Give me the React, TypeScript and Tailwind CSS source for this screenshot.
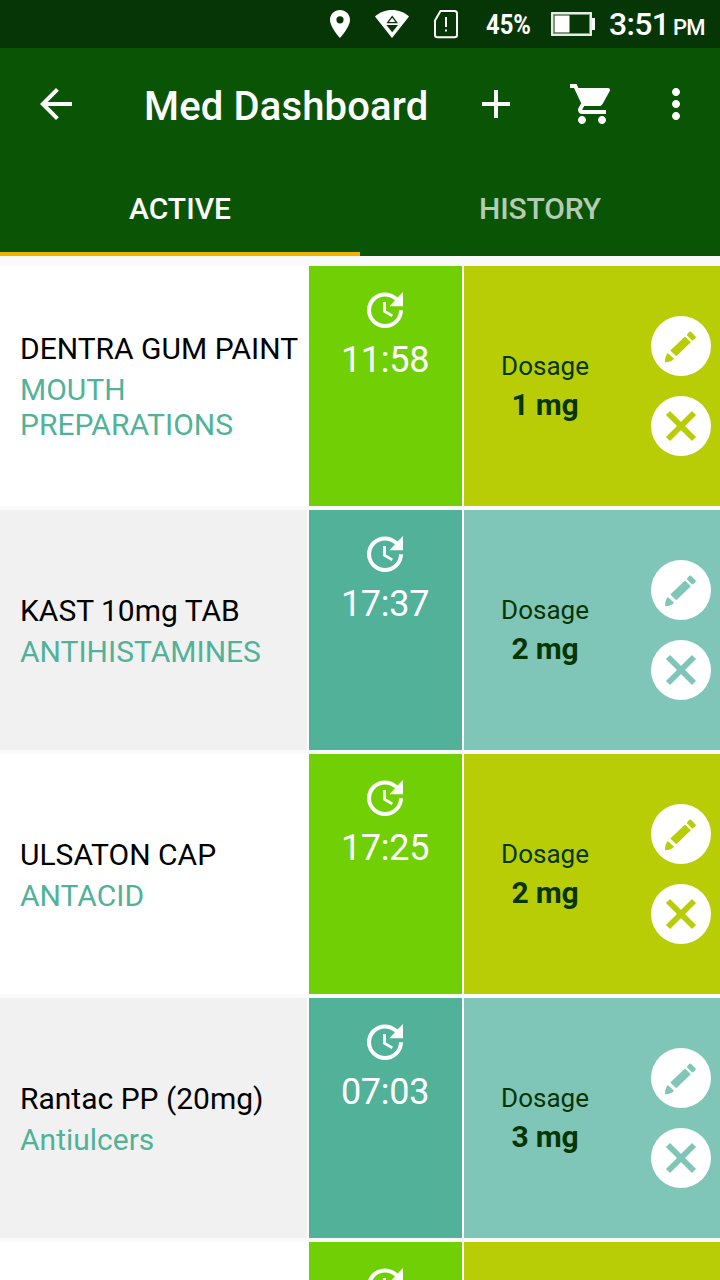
type Med = { name: string; category: string; time: string; dose: string };

const meds: (Med | null)[] = [
  { name: 'DENTRA GUM PAINT', category: 'MOUTH PREPARATIONS', time: '11:58', dose: '1 mg' },
  { name: 'KAST 10mg TAB', category: 'ANTIHISTAMINES', time: '17:37', dose: '2 mg' },
  { name: 'ULSATON CAP', category: 'ANTACID', time: '17:25', dose: '2 mg' },
  { name: 'Rantac PP (20mg)', category: 'Antiulcers', time: '07:03', dose: '3 mg' },
  null,
];

function Icon({ d, className = 'size-12' }: { d: string; className?: string }) {
  return (
    <svg viewBox="0 0 24 24" fill="currentColor" className={`block shrink-0 ${className}`}>
      <path d={d} />
    </svg>
  );
}

const UPDATE =
  'M21 10.12h-6.78l2.74-2.82c-2.73-2.7-7.15-2.8-9.88-.1-2.73 2.71-2.73 7.08 0 9.79s7.15 2.71 9.88 0C18.32 15.65 19 14.08 19 12.1h2c0 1.98-.88 4.55-2.64 6.29-3.51 3.48-9.21 3.48-12.72 0-3.5-3.47-3.53-9.11-.02-12.58s9.14-3.47 12.65 0L21 3v7.12zM12.5 8v4.25l3.5 2.08-.72 1.21L11 13V8h1.5z';
const BACK = 'M20 11H7.83l5.59-5.59L12 4l-8 8 8 8 1.41-1.41L7.83 13H20v-2z';
const PLUS = 'M19 13h-6v6h-2v-6H5v-2h6V5h2v6h6v2z';
const CART =
  'M7 18c-1.1 0-1.99.9-1.99 2S5.9 22 7 22s2-.9 2-2-.9-2-2-2zM1 2v2h2l3.6 7.59-1.35 2.45c-.16.28-.25.61-.25.96 0 1.1.9 2 2 2h12v-2H7.42c-.14 0-.25-.11-.25-.25l.03-.12.9-1.63h7.45c.75 0 1.41-.41 1.75-1.03l3.58-6.49c.08-.14.12-.31.12-.48 0-.55-.45-1-1-1H5.21l-.94-2H1zm16 16c-1.1 0-1.99.9-1.99 2s.89 2 1.99 2 2-.9 2-2-.9-2-2-2z';
const MORE =
  'M12 8c1.1 0 2-.9 2-2s-.9-2-2-2-2 .9-2 2 .9 2 2 2zm0 2c-1.1 0-2 .9-2 2s.9 2 2 2 2-.9 2-2-.9-2-2-2zm0 6c-1.1 0-2 .9-2 2s.9 2 2 2 2-.9 2-2-.9-2-2-2z';

function StatusBar() {
  return (
    <div className="flex h-12 shrink-0 items-start bg-[#063506] pl-[330px] text-white">
      <svg viewBox="0 0 20 28" className="mt-[10px] h-7 w-5" fill="currentColor">
        <path
          fillRule="evenodd"
          d="M10 0C4.4 0 0 4.4 0 9.8 0 17.2 10 28 10 28s10-10.800 10-18.200C20 4.400 15.600 0 10 0zm0 13.400a3.600 3.600 0 1 1 0-7.200 3.600 3.600 0 0 1 0 7.200z"
        />
      </svg>
      <svg viewBox="0 0 34 28" className="ml-[25px] mt-[10px] h-7 w-[34px]">
        <path d="M17 28L0 6.500C4.500 2.300 10.500 0 17 0s12.500 2.300 17 6.500z" fill="currentColor" />
        <path d="M17.200 5.500L23 13.300H11.400zM11.400 14.900H23L17.200 22.300z" fill="#063506" />
        <path d="M17.200 7.800L20.400 12.100H14z" fill="currentColor" />
      </svg>
      <svg viewBox="0 0 24 29" className="ml-[25px] mt-[10px] h-[29px] w-6" fill="none" stroke="currentColor">
        <path d="M6.500 1H20.500Q23 1 23 3.500V25Q23 27.300 20.500 27.300H3.500Q1 27.300 1 25V10.500Z" strokeWidth="2" />
        <path d="M12 7v10M12 19.500v2" strokeWidth="2" />
      </svg>
      <span className="ml-7 mt-[7px] h-9 w-[47px] origin-left scale-x-[0.850] whitespace-nowrap text-[28px] leading-9 font-bold">
        45%
      </span>
      <svg viewBox="0 0 44 24" className="ml-[18px] mt-3 h-6 w-11">
        <rect x="1" y="1" width="39" height="22" fill="none" stroke="#fff" strokeWidth="1.800" />
        <rect x="2.500" y="2.500" width="36" height="19" fill="none" stroke="#7e9b7e" strokeWidth="1" />
        <path d="M3.500 3.500h15v17h-15zM41 6h3v12h-3z" fill="#fff" />
      </svg>
      <span className="ml-[14px] mt-1.5 w-[64px] whitespace-nowrap text-[32px] leading-9 font-medium tracking-[-0.7px]">3:51</span>
      <span className="mt-[10px] text-[22px] leading-9 font-medium tracking-[-0.8px]">PM</span>
    </div>
  );
}

function Header() {
  return (
    <header className="shrink-0 bg-[#0a5405] text-white">
      <div className="flex h-28 items-center pl-8 pr-5">
        <Icon d={BACK} />
        <h1 className="ml-16 w-[328px] whitespace-nowrap pt-1.5 text-[40px] leading-[48px] font-medium tracking-[0.15px]">
          Med Dashboard
        </h1>
        <Icon d={PLUS} />
        <Icon d={CART} className="ml-12 size-12" />
        <Icon d={MORE} className="ml-9 size-12" />
      </div>
      <nav className="grid h-24 grid-cols-2 text-center text-[30px] leading-[98px] font-medium">
        <div className="h-24 border-b-4 border-[#f0b400]">ACTIVE</div>
        <div className="h-24 tracking-[-0.15px] text-[#b5ccb4]">HISTORY</div>
      </nav>
    </header>
  );
}

function MedRow({ med, alt }: { med: Med | null; alt: boolean }) {
  return (
    <li className="flex h-60 shrink-0 bg-white">
      <div className={`flex w-[307px] flex-col justify-center pl-5 pt-px text-[30px] leading-[35px] ${alt ? 'bg-[#f1f1f1]' : 'bg-white'}`}>
        {med && (
          <>
            <div className="whitespace-nowrap text-black">{med.name}</div>
            <div className="mt-1.5 text-[#51b299]">{med.category}</div>
          </>
        )}
      </div>
      <div className={`ml-0.5 flex w-[153px] flex-col items-center pr-px pt-5 text-white ${alt ? 'bg-[#51b299]' : 'bg-[#70cf05]'}`}>
        <Icon d={UPDATE} />
        {med && <div className="mt-[5px] text-[36px] leading-[42px] tracking-[-0.3px]">{med.time}</div>}
      </div>
      <div className={`ml-0.5 flex flex-1 items-center ${alt ? 'bg-[#80c6b8] text-[#80c6b8]' : 'bg-[#b8cd05] text-[#b8cd05]'}`}>
        {med && (
          <>
            <div className="mt-0.5 w-[162px] text-center text-[#063506]">
              <div className="text-[26px] leading-[30px]">Dosage</div>
              <div className="mt-1.5 text-[30px] leading-9 font-bold tracking-[-0.2px]">{med.dose}</div>
            </div>
            <div className="ml-[25px] flex flex-col gap-5">
              <button className="block size-[60px] rounded-full bg-white" aria-label="Edit">
                <svg viewBox="0 0 60 60" fill="currentColor" className="size-[60px]">
                  <path d="M38.300 15.800Q39.200 15 40 15.800L44.600 20.400Q45.200 21.200 44.600 21.900L41.500 24.800 35.600 18.900zM34 20.500L39.800 26.300 25.300 40.300 19.300 34.600zM16.800 37L23 42.700Q20.500 46 14 46.200Q13.800 40.500 16.800 37z" />
                </svg>
              </button>
              <button className="block size-[60px] rounded-full bg-white" aria-label="Remove">
                <svg viewBox="0 0 60 60" fill="none" stroke="currentColor" strokeWidth="5.800" className="size-[60px]">
                  <path d="M17 17L43 43M43 17L17 43" />
                </svg>
              </button>
            </div>
          </>
        )}
      </div>
    </li>
  );
}

export default function App() {
  return (
    <div className="flex h-[1280px] w-[720px] flex-col overflow-hidden bg-[#fafafa] font-['Roboto',sans-serif]">
      <StatusBar />
      <Header />
      <ul className="flex min-h-0 flex-1 flex-col gap-1 overflow-hidden pt-2.5">
        {meds.map((med, i) => (
          <MedRow key={i} med={med} alt={i % 2 === 1} />
        ))}
      </ul>
    </div>
  );
}
